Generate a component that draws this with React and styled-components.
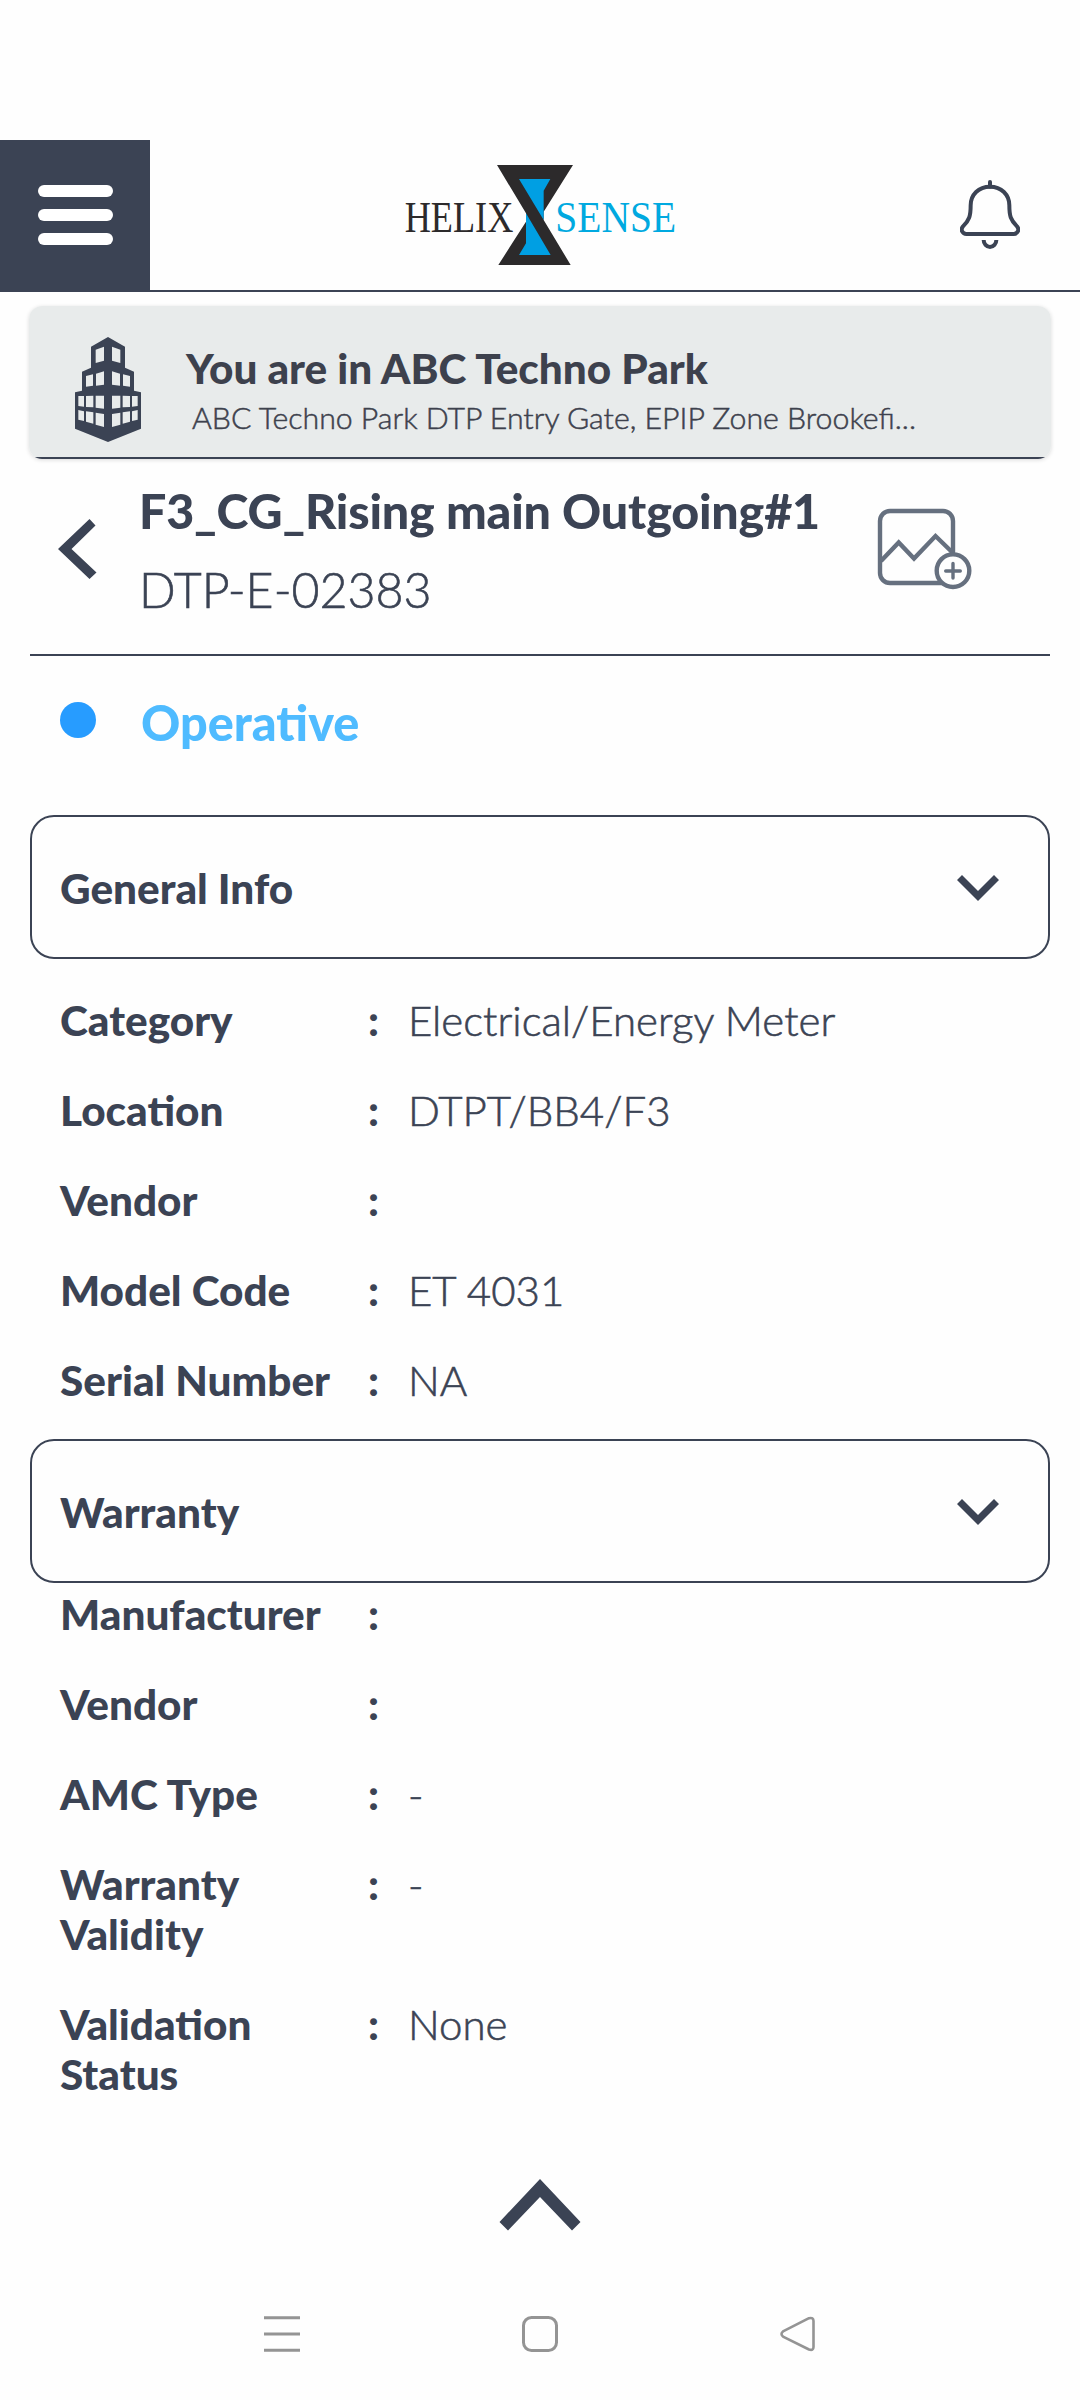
import React from "react";
import styled, { createGlobalStyle } from "styled-components";

const ink = "#3b4354";

const GlobalStyle = createGlobalStyle`
  body { margin: 0; background: #fefefe; }
  * { box-sizing: border-box; }
`;

const Screen = styled.div`
  width: 1080px;
  height: 2400px;
  display: flex;
  flex-direction: column;
  overflow: hidden;
  background: #fefefe;
  color: ${ink};
  font-family: Lato, "Noto Sans", sans-serif;
  font-size: 42px;
  line-height: 50px;
`;

const Header = styled.header`
  flex: none;
  margin-top: 140px;
  height: 152px;
  display: flex;
  align-items: flex-start;
  justify-content: space-between;
  border-bottom: 2px solid ${ink};
`;

const MenuButton = styled.div`
  width: 150px;
  height: 150px;
  display: flex;
  flex-direction: column;
  align-items: center;
  justify-content: center;
  gap: 12px;
  background: ${ink};
`;

const MenuBar = styled.span`
  width: 75px;
  height: 12px;
  border-radius: 6px;
  background: #fff;
`;

const Logo = styled.svg`
  width: 320px;
  height: 150px;
`;

const BellIcon = styled.svg`
  width: 60px;
  height: 69px;
  margin: 40px 60px 0 30px;
`;

const SiteBanner = styled.section`
  flex: none;
  height: 153px;
  margin: 14px 29px 0;
  padding: 31px 46px 0;
  display: flex;
  border-radius: 13px;
  background: linear-gradient(to top, ${ink} 2px, #e8ebeb 2px);
  box-shadow: 0 1px 4px rgba(0, 0, 0, 0.14);
`;

const BuildingIcon = styled.svg`
  width: 66px;
  height: 105px;
`;

const SiteText = styled.div`
  margin-left: 45px;
  padding-top: 6px;
`;

const SiteName = styled.div`
  color: #3d414d;
  font-size: 42.3px;
  font-weight: 900;
`;

const SiteAddress = styled.div`
  margin: 3px 0 0 6px;
  color: #3d414d;
  font-size: 30.25px;
  font-weight: 300;
  line-height: 42px;
  white-space: nowrap;
  -webkit-text-stroke: 0.5px #3d414d;
`;

const AssetHeader = styled.section`
  flex: none;
  height: 197px;
  margin: 0 30px;
  display: flex;
  border-bottom: 2px solid ${ink};
`;

const BackIcon = styled.svg`
  width: 40px;
  height: 60px;
  margin: 60px 0 0 28px;
`;

const AssetText = styled.div`
  width: 737px;
  margin: 21px 0 0 41px;
`;

const AssetName = styled.div`
  font-size: 48.4px;
  font-weight: 900;
  letter-spacing: -0.19px;
  line-height: 60px;
  white-space: nowrap;
`;

const AssetCode = styled.div`
  margin-top: 19px;
  font-size: 48.3px;
  font-weight: 300;
  line-height: 60px;
  -webkit-text-stroke: 0.6px ${ink};
`;

const AddImageIcon = styled.svg`
  width: 98px;
  height: 84px;
  margin-top: 48px;
`;

const StatusRow = styled.section`
  flex: none;
  height: 159px;
  padding: 46px 0 0 60px;
  display: flex;
`;

const StatusDot = styled.span`
  width: 36px;
  height: 36px;
  margin-right: 45px;
  border-radius: 50%;
  background: #279cff;
`;

const StatusText = styled.span`
  margin-top: -10px;
  color: #4fbbff;
  font-size: 48.6px;
  font-weight: 900;
  line-height: 60px;
`;

const SectionCard = styled.div`
  flex: none;
  height: 144px;
  margin: 0 30px;
  padding: 2px 49px 0 28px;
  display: flex;
  align-items: center;
  justify-content: space-between;
  border: 2px solid ${ink};
  border-radius: 24px;
  font-size: 42.3px;
  font-weight: 900;
`;

const ChevronIcon = styled.svg`
  width: 42px;
  height: 26px;
`;

const DetailList = styled.div`
  flex: none;
  display: flex;
  flex-direction: column;
  gap: 40px;
  padding: ${(p) => p.$top}px 60px 0;
  margin-bottom: ${(p) => p.$bottom}px;
`;

const DetailRow = styled.div`
  display: grid;
  grid-template-columns: 290px 18px 40px 1fr;
`;

const DetailLabel = styled.span`
  font-size: 42.3px;
  font-weight: 900;
`;

const Colon = styled.span`
  grid-column: 3;
  font-size: 42.3px;
  font-weight: 900;
`;

const DetailValue = styled.span`
  font-weight: 300;
  -webkit-text-stroke: 0.6px ${ink};
`;

const ScrollUp = styled.svg`
  flex: none;
  align-self: center;
  width: 82px;
  height: 52px;
`;

const SystemNav = styled.nav`
  flex: none;
  margin-top: auto;
  height: 132px;
  padding: 0 264px;
  display: flex;
  align-items: center;
  justify-content: space-between;
`;

const NavIcon = styled.svg`
  width: 36px;
  height: 36px;
  fill: none;
  stroke: #949494;
  stroke-width: 3;
`;

const generalInfo = [
  ["Category", "Electrical/Energy Meter"],
  ["Location", "DTPT/BB4/F3"],
  ["Vendor", ""],
  ["Model Code", "ET 4031"],
  ["Serial Number", "NA"],
];

const warrantyInfo = [
  ["Manufacturer", ""],
  ["Vendor", ""],
  ["AMC Type", "-"],
  ["Warranty Validity", "-"],
  ["Validation Status", "None"],
];

const windowPanes = [
  "287,659 312,650 312,692 287,699",
  "258,738 279,733 279,767 258,770",
  "288,731 312,724 312,764 288,767",
  "235,798 252,798 252,830 235,828",
  "258,798 280,797 280,832 258,831",
  "287,797 312,797 312,836 287,833",
  "235,840 252,844 252,873 235,869",
  "258,844 280,847 280,881 258,875",
  "287,848 312,852 312,891 287,884",
];

function Building() {
  return (
    <BuildingIcon viewBox="225 621 198 315">
      <path
        fill={ink}
        d="M324 621 375 650V713L402 725V782L423 787V896L324 936 225 896V787L246 782V725L273 713V650Z"
      />
      <g fill="#e8ebeb">
        {windowPanes.map((p) => (
          <polygon key={p} points={p} />
        ))}
        <g transform="translate(648 0) scale(-1 1)">
          {windowPanes.map((p) => (
            <polygon key={p} points={p} />
          ))}
        </g>
      </g>
    </BuildingIcon>
  );
}

function Brand() {
  return (
    <Logo viewBox="0 0 960 450">
      <polygon
        fill="#2c2a2b"
        points="351,75 579,75 491,215 491,240 572,375 355,375 438,245 438,220"
      />
      <polygon fill="#009fe3" points="417,117 511,117 491,152 491,240" />
      <polygon fill="#009fe3" points="438,220 512,345 417,345 438,310" />
      <g fontFamily='"Liberation Serif", serif' fontSize="136">
        <text x="74" y="276" fill="#2c2a2b" textLength="326" lengthAdjust="spacingAndGlyphs">
          HELIX
        </text>
        <text x="526" y="276" fill="#00a9e0" textLength="362" lengthAdjust="spacingAndGlyphs">
          SENSE
        </text>
      </g>
    </Logo>
  );
}

function Section({ title }) {
  return (
    <SectionCard>
      <span>{title}</span>
      <ChevronIcon viewBox="0 0 42 26">
        <path d="M0 5 5 0 21 16 37 0 42 5 21 26Z" fill={ink} />
      </ChevronIcon>
    </SectionCard>
  );
}

function Details({ rows, top, bottom }) {
  return (
    <DetailList $top={top} $bottom={bottom}>
      {rows.map(([label, value]) => (
        <DetailRow key={label}>
          <DetailLabel>{label}</DetailLabel>
          <Colon>:</Colon>
          <DetailValue>{value}</DetailValue>
        </DetailRow>
      ))}
    </DetailList>
  );
}

export default function App() {
  return (
    <>
      <GlobalStyle />
      <Screen>
        <Header>
          <MenuButton>
            <MenuBar />
            <MenuBar />
            <MenuBar />
          </MenuButton>
          <Brand />
          <BellIcon viewBox="780 150 180 207" fill="none" stroke={ink} strokeWidth="12">
            <path d="M870 170C836 170 812 194 812 226C812 258 808 270 789 289C780 299 788 312 799 312H941C952 312 960 299 951 289C932 270 928 258 928 226C928 194 904 170 870 170Z" />
            <path d="M870 170V156" strokeLinecap="round" />
            <path d="M851 330A19 21 0 0 0 889 330" />
          </BellIcon>
        </Header>

        <SiteBanner>
          <Building />
          <SiteText>
            <SiteName>You are in ABC Techno Park</SiteName>
            <SiteAddress>ABC Techno Park DTP Entry Gate, EPIP Zone Brookefi...</SiteAddress>
          </SiteText>
        </SiteBanner>

        <AssetHeader>
          <BackIcon viewBox="0 0 40 60">
            <path d="M0 30 31.5 0 37.5 6.5 13.5 30 38.5 53.5 31.5 60Z" fill={ink} />
          </BackIcon>
          <AssetText>
            <AssetName>F3_CG_Rising main Outgoing#1</AssetName>
            <AssetCode>DTP-E-02383</AssetCode>
          </AssetText>
          <AddImageIcon viewBox="876 507 98 84" fill="none" stroke="#66707f" strokeWidth="4.4">
            <rect x="880" y="511" width="73" height="72" rx="10" />
            <path d="M881 561 898.7 542.5 914 558.5 935.5 536 953 553" />
            <circle cx="953" cy="570.7" r="16.3" fill="#fefefe" />
            <path d="M953 563.5V578M945.7 571H960.3" strokeWidth="3.4" strokeLinecap="round" />
          </AddImageIcon>
        </AssetHeader>

        <StatusRow>
          <StatusDot />
          <StatusText>Operative</StatusText>
        </StatusRow>

        <Section title="General Info" />
        <Details rows={generalInfo} top={36} bottom={34} />
        <Section title="Warranty" />
        <Details rows={warrantyInfo} top={6} bottom={80} />

        <ScrollUp viewBox="499 2179 82 52">
          <path d="M540 2179 580.5 2222 572 2230.5 540 2197 508 2230.5 499.5 2222Z" fill={ink} />
        </ScrollUp>

        <SystemNav>
          <NavIcon viewBox="0 0 36 36">
            <path d="M0 1.7H36M0 18H36M0 34.3H36" />
          </NavIcon>
          <NavIcon viewBox="0 0 36 36">
            <rect x="1.5" y="1.5" width="33" height="33" rx="8" />
          </NavIcon>
          <NavIcon viewBox="0 0 36 36">
            <path
              d="M29 2.2 3 15.4Q0 18 3 20.6L29 33.5Q33.5 35 33.5 31V5Q33.5 1 29 2.2Z"
              strokeWidth="2.6"
              strokeLinejoin="round"
            />
          </NavIcon>
        </SystemNav>
      </Screen>
    </>
  );
}
